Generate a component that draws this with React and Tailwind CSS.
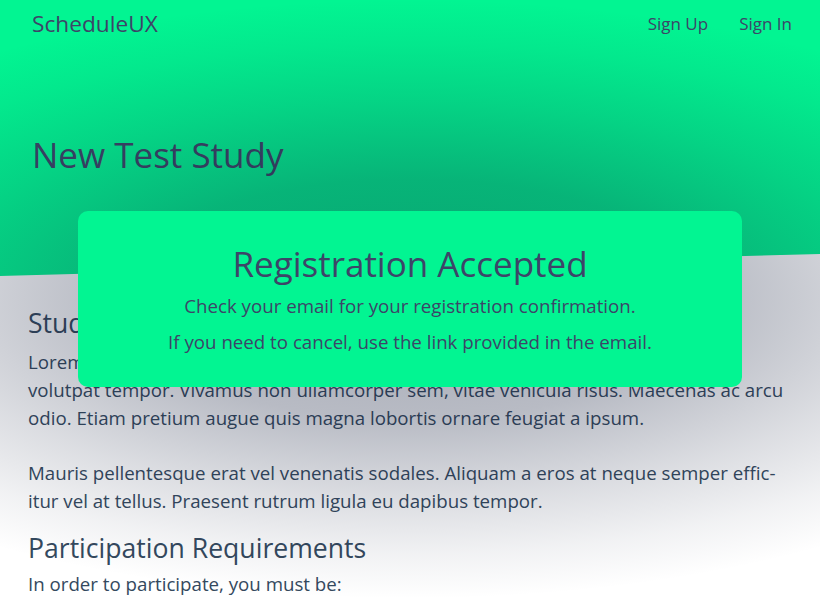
import React from "react";

export default function App() {

  // =====================================
  // PAGE
  // =====================================
  return (

    <div
      className="relative h-[600px] w-full overflow-hidden bg-white text-[#34495e]"
      style={{ fontFamily: '"Open Sans", "Noto Sans", sans-serif' }}
    >

      {/* HERO */}
      <div className="h-[276px] bg-[#02f592] [clip-path:polygon(0_0,100%_0,100%_92%,0_100%)]">

        {/* NAV */}
        <div className="flex items-center justify-between pl-8 pr-[28px] pt-[7px] text-[#3d4568]">

          <div className="text-[22.7px]">
            ScheduleUX
          </div>

          <div className="flex items-center gap-[31px] text-[17px]">
            <span>Sign Up</span>
            <span>Sign In</span>
          </div>
        </div>

        {/* TITLE */}
        <h1 className="mt-[88px] px-8 text-[35px] text-[#3d4568]">
          New Test Study
        </h1>
      </div>

      {/* CONTENT */}
      <div className="px-7 pt-[29px]">

        <h2 className="text-[26.6px] leading-[36px]">
          Study Description
        </h2>

        <p className="mt-[7px] text-[18.7px] leading-[28px]">
          Lorem ipsum dolor sit amet, consectetur adipiscing elit. Fusce at ante a nisl mollis
          volutpat tempor. Vivamus non ullamcorper sem, vitae vehicula risus. Maecenas ac arcu
          odio. Etiam pretium augue quis magna lobortis ornare feugiat a ipsum.
        </p>

        <p className="mt-[27px] text-[18.7px] leading-[28px]">
          Mauris pellentesque erat vel venenatis sodales. Aliquam a eros at neque semper effic{"\u00AD"}itur vel at tellus. Praesent rutrum ligula eu dapibus tempor.
        </p>

        <h2 className="mt-[15px] text-[26.6px] leading-[36px]">
          Participation Requirements
        </h2>

        <p className="mt-[4px] text-[18.7px] leading-[28px]">
          In order to participate, you must be:
        </p>
      </div>

      {/* BACKDROP SHADE */}
      <div className="pointer-events-none absolute inset-0 bg-[radial-gradient(ellipse_736px_300px_at_410px_299px,rgba(20,30,60,0.38)_0%,rgba(20,30,60,0.3)_40%,rgba(20,30,60,0.15)_67%,rgba(20,30,60,0.06)_85%,rgba(20,30,60,0)_100%)]" />

      {/* MODAL */}
      <div className="absolute left-[78px] top-[211px] flex h-[176px] w-[664px] flex-col items-center rounded-[10px] bg-[#02f592] pt-[30px] text-[#3d4568]">

        <h2 className="text-[35px] leading-[46px]">
          Registration Accepted
        </h2>

        <p className="mt-[6px] text-[18.7px] leading-[26px]">
          Check your email for your registration confirmation.
        </p>

        <p className="mt-[10px] text-[18.7px] leading-[26px]">
          If you need to cancel, use the link provided in the email.
        </p>
      </div>
    </div>
  );
}
